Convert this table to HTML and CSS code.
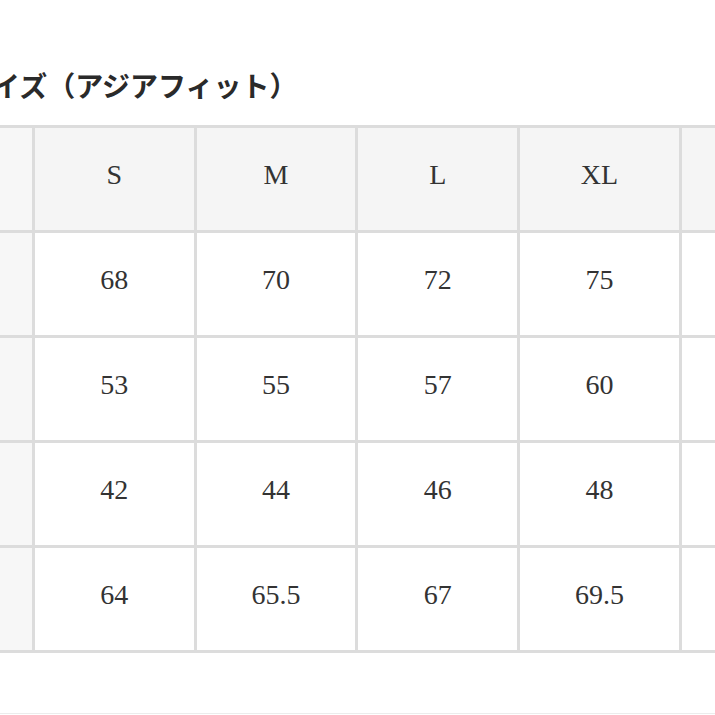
FILE: index.html
```html
<!DOCTYPE html>
<html lang="ja">
<head>
<meta charset="utf-8">
<title>サイズ（アジアフィット）</title>
<link rel="stylesheet" href="styles.css">
</head>
<body>
<div class="page">
  <h2 class="title">サイズ（アジアフィット）</h2>
  <div class="table">
    <div class="cell head side"></div>
    <div class="cell head">S</div>
    <div class="cell head">M</div>
    <div class="cell head">L</div>
    <div class="cell head">XL</div>
    <div class="cell head"></div>

    <div class="cell side"></div>
    <div class="cell">68</div>
    <div class="cell">70</div>
    <div class="cell">72</div>
    <div class="cell">75</div>
    <div class="cell"></div>

    <div class="cell side"></div>
    <div class="cell">53</div>
    <div class="cell">55</div>
    <div class="cell">57</div>
    <div class="cell">60</div>
    <div class="cell"></div>

    <div class="cell side"></div>
    <div class="cell">42</div>
    <div class="cell">44</div>
    <div class="cell">46</div>
    <div class="cell">48</div>
    <div class="cell"></div>

    <div class="cell side"></div>
    <div class="cell">64</div>
    <div class="cell">65.5</div>
    <div class="cell">67</div>
    <div class="cell">69.5</div>
    <div class="cell"></div>
  </div>
  <div class="rule"></div>
</div>
</body>
</html>
```

FILE: styles.css
```css
html, body {
  margin: 0;
  padding: 0;
  overflow: hidden;
  background: #ffffff;
}

.page {
  width: 715px;
  height: 715px;
  overflow: hidden;
}

.title {
  margin: 0 0 0 -36px;
  padding-top: 65px;
  height: 40px;
  line-height: 40px;
  font-family: "Noto Sans CJK JP", sans-serif;
  font-size: 28px;
  font-weight: 700;
  color: #2a2a2a;
  white-space: nowrap;
}

.table {
  margin: 20px 0 0 -91px;
  width: max-content;
  display: grid;
  grid-template-columns: 120px repeat(5, 158.7px);
  grid-auto-rows: 102px;
  gap: 3px;
  padding: 3px;
  background: #dcdcdc;
}

.cell {
  display: flex;
  align-items: center;
  justify-content: center;
  padding-bottom: 8px;
  box-sizing: border-box;
  background: #ffffff;
  font-family: "Liberation Serif", "Times New Roman", serif;
  font-size: 28px;
  color: #333333;
}

.head {
  background: #f5f5f5;
}

.side {
  background: #f7f7f7;
}

.rule {
  margin-top: 60px;
  border-top: 1px solid #ececec;
}
```
